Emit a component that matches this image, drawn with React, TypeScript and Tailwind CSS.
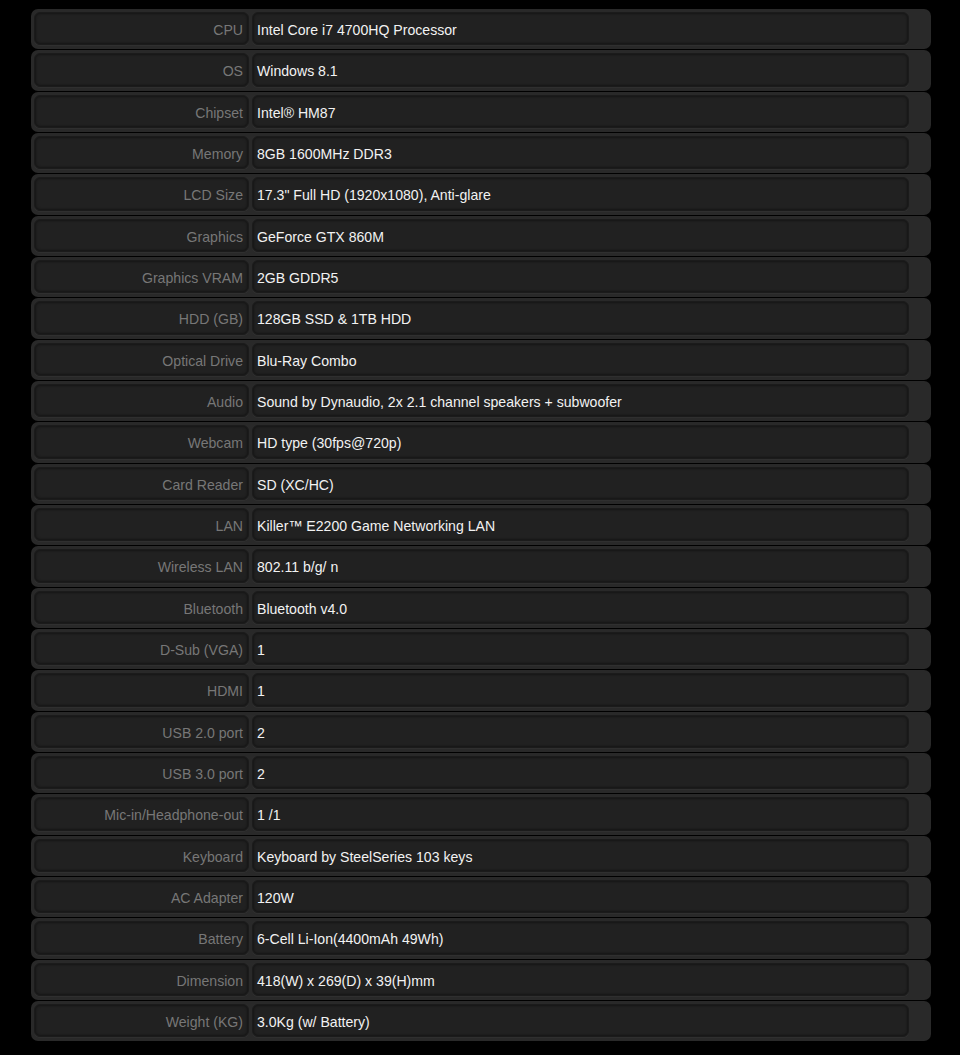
const specs: [string, string][] = [
  ["CPU", "Intel Core i7 4700HQ Processor"],
  ["OS", "Windows 8.1"],
  ["Chipset", "Intel® HM87"],
  ["Memory", "8GB 1600MHz DDR3"],
  ["LCD Size", '17.3" Full HD (1920x1080), Anti-glare'],
  ["Graphics", "GeForce GTX 860M"],
  ["Graphics VRAM", "2GB GDDR5"],
  ["HDD (GB)", "128GB SSD & 1TB HDD"],
  ["Optical Drive", "Blu-Ray Combo"],
  ["Audio", "Sound by Dynaudio, 2x 2.1 channel speakers + subwoofer"],
  ["Webcam", "HD type (30fps@720p)"],
  ["Card Reader", "SD (XC/HC)"],
  ["LAN", "Killer™ E2200 Game Networking LAN"],
  ["Wireless LAN", "802.11 b/g/ n"],
  ["Bluetooth", "Bluetooth v4.0"],
  ["D-Sub (VGA)", "1"],
  ["HDMI", "1"],
  ["USB 2.0 port", "2"],
  ["USB 3.0 port", "2"],
  ["Mic-in/Headphone-out", "1 /1"],
  ["Keyboard", "Keyboard by SteelSeries 103 keys"],
  ["AC Adapter", "120W"],
  ["Battery", "6-Cell Li-Ion(4400mAh 49Wh)"],
  ["Dimension", "418(W) x 269(D) x 39(H)mm"],
  ["Weight (KG)", "3.0Kg (w/ Battery)"],
];

const cell =
  "flex items-center pt-[4px] rounded-[6px] bg-[#212121] shadow-[inset_0_0_3px_rgba(0,0,0,0.7),0_1px_0_rgba(255,255,255,0.03)] border border-[#1b1b1b]";

const SpecRow = ({ label, value }: { label: string; value: string }) => (
  <div className="flex h-[40.33px] gap-[3px] rounded-[7px] bg-[#292929] pt-[3px] pb-[4px] pl-[3px] pr-[22px]">
    <div className={`${cell} w-[215px] justify-end pr-[5px] text-[#777777]`}>
      {label}
    </div>
    <div className={`${cell} flex-1 pl-[4px] text-[#f2f2f2]`}>{value}</div>
  </div>
);

export default function App() {
  return (
    <div
      className="min-h-[1055px] bg-black pt-[9px] pl-[31px] text-[14.1px]"
      style={{ fontFamily: '"Liberation Sans", Arial, sans-serif' }}
    >
      <div className="flex w-[900px] flex-col gap-[1px]">
        {specs.map(([label, value]) => (
          <SpecRow key={label} label={label} value={value} />
        ))}
      </div>
    </div>
  );
}
